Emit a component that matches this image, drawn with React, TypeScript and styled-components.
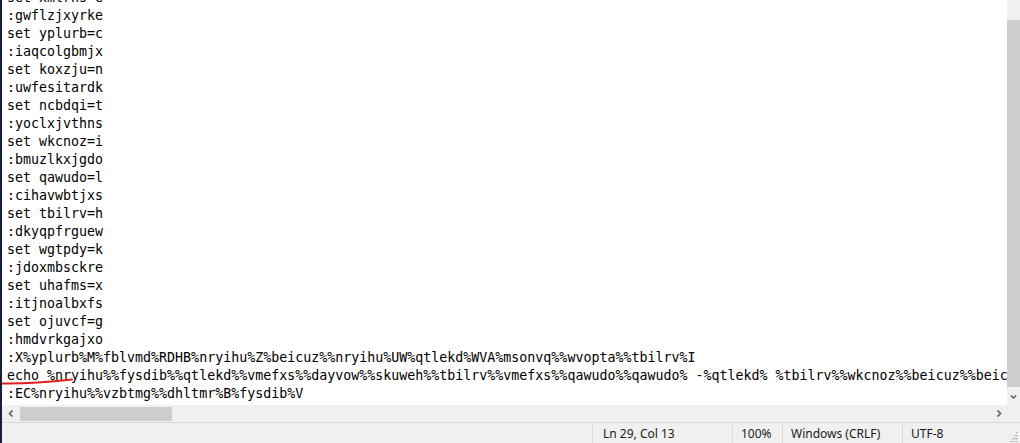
import React from "react";
import styled, { createGlobalStyle } from "styled-components";

const Global = createGlobalStyle`
  html, body { margin: 0; padding: 0; background: #ffffff; overflow: hidden; }
  #root { width: 1020px; height: 443px; }
`;

const Window = styled.div`
  width: 1020px;
  height: 443px;
  display: flex;
  flex-direction: column;
  box-sizing: border-box;
  border-left: 2px solid #14213d;
  background: #f0f0f0;
  overflow: hidden;
`;

const EditorRow = styled.div`
  display: flex;
  height: 405px;
`;

const TextArea = styled.div`
  position: relative;
  flex: 1;
  background: #ffffff;
  overflow: hidden;
`;

const Lines = styled.div`
  margin-top: -11px;
  padding-left: 5px;
  font-family: "DejaVu Sans Mono", "Liberation Mono", monospace;
  font-size: 13.3px;
  line-height: 18px;
  color: #000000;
  white-space: pre;
`;

const Line = styled.div`
  height: 18px;
`;

const Mark = styled.svg`
  position: absolute;
  left: 0;
  top: 376px;
  width: 80px;
  height: 10px;
  pointer-events: none;
`;

const VScroll = styled.div`
  width: 13px;
  display: flex;
  flex-direction: column;
  background: #f0f0f0;
`;

const VTrackTop = styled.div`
  height: 20px;
`;

const VThumb = styled.div`
  flex: 1;
  background: #cdcdcd;
`;

const ArrowBtn = styled.div<{ $w?: number; $h?: number }>`
  width: ${(p) => (p.$w ? `${p.$w}px` : "auto")};
  height: ${(p) => (p.$h ? `${p.$h}px` : "auto")};
  display: flex;
  align-items: center;
  justify-content: center;
  flex-shrink: 0;
`;

const HScrollRow = styled.div`
  display: flex;
  align-items: center;
  height: 17px;
  background: #f0f0f0;
`;

const HTrack = styled.div`
  flex: 1;
  height: 17px;
  display: flex;
  align-items: center;
`;

const HThumb = styled.div`
  width: 152px;
  height: 14px;
  margin-left: 1px;
  background: #cdcdcd;
`;

const Corner = styled.div`
  width: 13px;
  height: 17px;
`;

const StatusBar = styled.div`
  position: relative;
  height: 21px;
  box-sizing: border-box;
  border-top: 1px solid #d9d9d9;
  display: grid;
  grid-template-columns: 590px 140px 50px 120px 1fr;
  background: #f0f0f0;
  font-family: "Segoe UI", "Noto Sans", "Liberation Sans", sans-serif;
  font-size: 12px;
  color: #1a1a1a;
`;

const Cell = styled.div<{ $pad?: number; $sep?: boolean }>`
  display: flex;
  align-items: center;
  padding-left: ${(p) => p.$pad ?? 8}px;
  border-left: ${(p) => (p.$sep ? "1px solid #d9d9d9" : "none")};
  white-space: nowrap;
`;

const Grip = styled.svg`
  position: absolute;
  right: 2px;
  bottom: 1px;
  width: 10px;
  height: 10px;
`;

const lines = [
  "set xmlrhs=e",
  ":gwflzjxyrke",
  "set yplurb=c",
  ":iaqcolgbmjx",
  "set koxzju=n",
  ":uwfesitardk",
  "set ncbdqi=t",
  ":yoclxjvthns",
  "set wkcnoz=i",
  ":bmuzlkxjgdo",
  "set qawudo=l",
  ":cihavwbtjxs",
  "set tbilrv=h",
  ":dkyqpfrguew",
  "set wgtpdy=k",
  ":jdoxmbsckre",
  "set uhafms=x",
  ":itjnoalbxfs",
  "set ojuvcf=g",
  ":hmdvrkgajxo",
  ":X%yplurb%M%fblvmd%RDHB%nryihu%Z%beicuz%%nryihu%UW%qtlekd%WVA%msonvq%%wvopta%%tbilrv%I",
  "echo %nryihu%%fysdib%%qtlekd%%vmefxs%%dayvow%%skuweh%%tbilrv%%vmefxs%%qawudo%%qawudo% -%qtlekd% %tbilrv%%wkcnoz%%beicuz%%beicuz%%skuweh%",
  ":EC%nryihu%%vzbtmg%%dhltmr%B%fysdib%V",
];

const Chevron = ({ dir }: { dir: "down" | "left" | "right" }) => {
  const pts =
    dir === "down"
      ? "1,1.5 3.5,4 6,1.5"
      : dir === "left"
      ? "4.5,0.5 1.5,3.5 4.5,6.5"
      : "1.5,0.5 4.5,3.5 1.5,6.5";
  const w = dir === "down" ? 7 : 6;
  const h = dir === "down" ? 5 : 7;
  return (
    <svg width={w} height={h} viewBox={`0 0 ${w} ${h}`}>
      <polyline points={pts} fill="none" stroke="#606060" strokeWidth="1.6" />
    </svg>
  );
};

export default function App() {
  return (
    <>
      <Global />
      <Window>
        <EditorRow>
          <TextArea>
            <Lines>
              {lines.map((l, i) => (
                <Line key={i}>{l}</Line>
              ))}
            </Lines>
            <Mark viewBox="0 0 80 10">
              <path
                d="M0 7.5 Q 30 8 70 3.5"
                fill="none"
                stroke="#e0201c"
                strokeWidth="2"
                strokeLinecap="round"
              />
            </Mark>
          </TextArea>
          <VScroll>
            <VTrackTop />
            <VThumb />
            <ArrowBtn $h={18}>
              <Chevron dir="down" />
            </ArrowBtn>
          </VScroll>
        </EditorRow>
        <HScrollRow>
          <ArrowBtn $w={17} $h={17}>
            <Chevron dir="left" />
          </ArrowBtn>
          <HTrack>
            <HThumb />
          </HTrack>
          <ArrowBtn $w={17} $h={17}>
            <Chevron dir="right" />
          </ArrowBtn>
          <Corner />
        </HScrollRow>
        <StatusBar>
          <Cell />
          <Cell $sep $pad={10}>Ln 29, Col 13</Cell>
          <Cell $sep>100%</Cell>
          <Cell $sep>Windows (CRLF)</Cell>
          <Cell $sep>UTF-8</Cell>
          <Grip viewBox="0 0 10 10">
            {[
              [8, 0],
              [6, 3],
              [8, 3],
              [4, 6],
              [6, 6],
              [8, 6],
              [2, 9],
              [4, 9],
              [6, 9],
              [8, 9],
            ].map(([x, y], i) => (
              <rect key={i} x={x} y={y} width="1.5" height="1.5" fill="#b4b4b4" />
            ))}
          </Grip>
        </StatusBar>
      </Window>
    </>
  );
}
